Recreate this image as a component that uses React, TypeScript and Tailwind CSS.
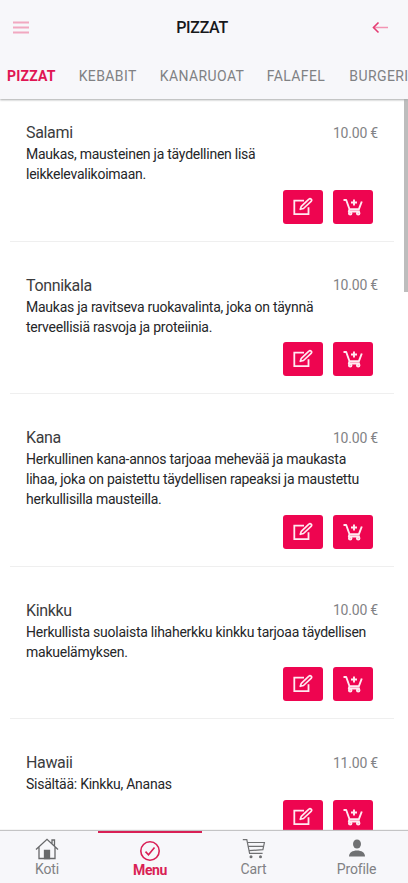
const items = [
  { name: "Salami", price: "10.00 €", lines: ["Maukas, mausteinen ja täydellinen lisä", "leikkelevalikoimaan."] },
  { name: "Tonnikala", price: "10.00 €", lines: ["Maukas ja ravitseva ruokavalinta, joka on täynnä", "terveellisiä rasvoja ja proteiinia."] },
  { name: "Kana", price: "10.00 €", lines: ["Herkullinen kana-annos tarjoaa mehevää ja maukasta", "lihaa, joka on paistettu täydellisen rapeaksi ja maustettu", "herkullisilla mausteilla."] },
  { name: "Kinkku", price: "10.00 €", lines: ["Herkullista suolaista lihaherkku kinkku tarjoaa täydellisen", "makuelämyksen."] },
  { name: "Hawaii", price: "11.00 €", lines: ["Sisältää: Kinkku, Ananas"] },
];

function EditIcon() {
  return (
    <svg width="20" height="20" viewBox="0 0 20 20" fill="none" stroke="#ffeaf1" strokeWidth="1.8">
      <path d="M11 3.700H1.300v13.500h14.200v-7" />
      <path d="M7.300 12.300l1-3 7.600-7.200a1.500 1.500 0 0 1 2.200 2.200l-7.600 7.200z" strokeWidth="1.700" strokeLinejoin="round" />
    </svg>
  );
}

function CartPlusIcon() {
  return (
    <svg width="20" height="20" viewBox="0 0 20 20" fill="none" stroke="#ffeaf1" strokeWidth="1.900">
      <path d="M.5 3h2.700l3.300 9.300h9.300l3-7.800M6.500 12l-.7 2.500h11M11 2.500v6M8 5.500h6" strokeLinejoin="round" />
      <circle cx="7.200" cy="16.200" r="1.300" />
      <circle cx="15.200" cy="16.200" r="1.300" />
    </svg>
  );
}

function HomeIcon() {
  return (
    <svg width="24" height="22" viewBox="0 0 24 22" fill="none" stroke="#68696b" strokeWidth="1.300">
      <path d="M1 11.500L12 1.300l11 10.200M4 9.200V20.500h16V9.200M17 5.500V2h2.500v5.800" />
      <path d="M9.500 12.500h5v8h-5z" fill="#68696b" />
    </svg>
  );
}

function CheckIcon() {
  return (
    <svg width="22" height="22" viewBox="0 0 22 22" fill="none" stroke="#d91f55" strokeWidth="1.600">
      <circle cx="11" cy="11" r="9.200" />
      <path d="M6.500 11.600l3 3.200 6-7.400" />
    </svg>
  );
}

function CartIcon() {
  return (
    <svg width="24" height="22" viewBox="0 0 24 22" fill="none" stroke="#707173" strokeWidth="1.200">
      <path d="M.8 1.700h4l2.800 13.700h13M5.400 4.500h17l-1.500 7.200-14 1M6.200 8.300h15.500" />
      <circle cx="9" cy="18.800" r="1.500" fill="#707173" stroke="none" />
      <circle cx="18.500" cy="18.800" r="1.500" fill="#707173" stroke="none" />
    </svg>
  );
}

function ProfileIcon() {
  return (
    <svg width="18" height="22" viewBox="0 0 18 22" fill="#707173">
      <ellipse cx="9" cy="6" rx="4" ry="4.500" />
      <path d="M1 18.500c0-4 3.500-6 8-6s8 2 8 6z" />
    </svg>
  );
}

export default function App() {
  return (
    <div className="flex h-[883px] w-[408px] flex-col overflow-hidden bg-white font-['Roboto',sans-serif]">
      <header className="relative z-10 h-[99px] shrink-0 bg-[#f7f7fa] shadow-[0_1px_2px_0px_#a9aaab]">
        <div className="grid h-[55px] grid-cols-[48px_1fr_48px] items-center px-[13px]">
          <svg width="16" height="14" viewBox="0 0 16 14" stroke="#f1a8c0" strokeWidth="2">
            <path d="M0 1.500h16M0 6.500h16M0 11.500h16" />
          </svg>
          <h1 className="pr-[4px] text-center text-[16px] font-medium tracking-[-0.300px] text-[#17181a]">PIZZAT</h1>
          <svg className="ml-auto mr-[6px]" width="17" height="14" viewBox="0 0 17 14" fill="none">
            <path d="M1.500 6.500H16" stroke="#f394b3" strokeWidth="1.500" />
            <path d="M6.500 1.500l-5 5 5 5" stroke="#e43c73" strokeWidth="1.600" />
          </svg>
        </div>
        <nav className="flex h-[43px] items-center gap-[23px] overflow-hidden pl-[7px] text-[14px] whitespace-nowrap text-[#808184]">
          <span className="w-[49px] font-bold tracking-[0.200px] text-[#e01553]">PIZZAT</span>
          <span className="w-[59px] tracking-[0.400px]">KEBABIT</span>
          <span className="w-[84px] tracking-[0.400px]">KANARUOAT</span>
          <span className="w-[59px] tracking-[0.400px]">FALAFEL</span>
          <span className="pl-[1px] tracking-[0.400px]">BURGERIT</span>
        </nav>
      </header>
      <main className="flex min-h-0 flex-1 overflow-hidden">
        <div className="-mt-[10px] flex-1 pl-[10px]">
          {items.map((item) => (
            <article key={item.name} className="w-[384px] border-b border-[#efefef] pt-[33px] pr-[16px] pb-[17px] pl-[16px]">
              <div className="flex h-[22px] items-center justify-between">
                <h2 className="text-[16px] tracking-[-0.340px] text-[#3b3c3e]">{item.name}</h2>
                <span className="text-[14px] tracking-[-0.200px] text-[#828386]">{item.price}</span>
              </div>
              <div className="text-[14px] leading-[20px] tracking-[-0.250px] whitespace-nowrap text-[#252628]">
                {item.lines.map((line) => (
                  <p key={line}>{line}</p>
                ))}
              </div>
              <div className="mt-[5.500px] flex justify-end gap-[10px] pr-[5px]">
                <button className="flex h-[34px] w-[40px] items-center justify-center rounded-[3px] bg-[#ee0550]"><EditIcon /></button>
                <button className="flex h-[34px] w-[40px] items-center justify-center rounded-[3px] bg-[#ee0550]"><CartPlusIcon /></button>
              </div>
            </article>
          ))}
        </div>
        <div className="h-[193px] w-[4px] bg-[#bdbdbd]" />
      </main>
      <footer className="relative z-10 grid h-[52px] shrink-0 grid-cols-[98px_104px_103px_103px] bg-[#f7f7fa] text-[14px] tracking-[-0.150px] text-[#808184] shadow-[0_-1px_1px_0px_#c4c4c5]">
        <div className="flex flex-col items-center border-t-2 border-transparent pt-[5px] pr-[4px]"><HomeIcon /><span className="leading-[18px]">Koti</span></div>
        <div className="flex flex-col items-center border-t-2 border-[#d91f55] pt-[7px] text-[#d91f55]"><CheckIcon /><span className="leading-[17px] font-bold tracking-[-0.400px]">Menu</span></div>
        <div className="flex flex-col items-center border-t-2 border-transparent pt-[5px]"><CartIcon /><span className="leading-[18px]">Cart</span></div>
        <div className="flex flex-col items-center border-t-2 border-transparent pt-[5px]"><ProfileIcon /><span className="leading-[18px]">Profile</span></div>
      </footer>
    </div>
  );
}
